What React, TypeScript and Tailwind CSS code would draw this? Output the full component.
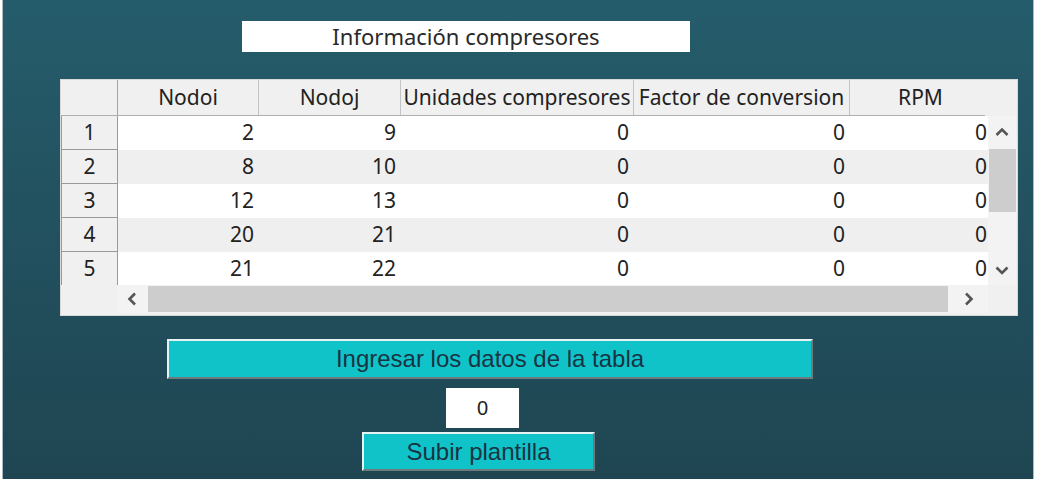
import React from "react";

type Dir = "up" | "down" | "left" | "right";

const chevronPaths: Record<Dir, string> = {
  up: "M1.5 9l5.5-5.5 5.5 5.5",
  down: "M1.5 4.5l5.5 5.5 5.5-5.5",
  left: "M9 1.5L3.5 7 9 12.5",
  right: "M5 1.5L10.5 7 5 12.5",
};

function Chevron({ dir }: { dir: Dir }) {
  return (
    <svg width="14" height="14" viewBox="0 0 14 14" fill="none" stroke="#555" strokeWidth="2.6">
      <path d={chevronPaths[dir]} />
    </svg>
  );
}

const columns = [
  { label: "Nodoi", w: "w-[141px]" },
  { label: "Nodoj", w: "w-[142px]" },
  { label: "Unidades compresores", w: "w-[233px]" },
  { label: "Factor de conversion", w: "w-[216px]" },
  { label: "RPM", w: "w-[142px]" },
];

const rows = [
  [2, 9, 0, 0, 0],
  [8, 10, 0, 0, 0],
  [12, 13, 0, 0, 0],
  [20, 21, 0, 0, 0],
  [21, 22, 0, 0, 0],
];

const raised =
  "border-2 border-t-[#e6f3f3] border-l-[#e6f3f3] border-b-[#6d7b7f] border-r-[#6d7b7f] bg-[#10c3c8] text-[#183442] flex items-center justify-center font-['Liberation_Sans',Arial,sans-serif] text-[24px]";

function DataGrid() {
  return (
    <div className="ml-[57px] mt-[27px] flex h-[237px] w-[958px] flex-col border border-[#d9d9d9] bg-[#f0f0f0] font-['Noto_Sans',sans-serif] text-[21px] text-[#222]">
      {/* header */}
      <div className="flex h-[36px] w-[924px] overflow-hidden border-b border-[#b0b0b0]">
        <div className="h-full w-[57px] shrink-0 border-r border-[#a3a3a3]" />
        {columns.map((c) => (
          <div
            key={c.label}
            className={`${c.w} flex h-full shrink-0 items-center justify-center overflow-hidden whitespace-nowrap border-r border-[#c4c4c4]`}
          >
            {c.label}
          </div>
        ))}
      </div>

      {/* body + vertical scrollbar */}
      <div className="flex h-[169px]">
        <div className="w-[927px] overflow-hidden">
          {rows.map((r, i) => (
            <div key={i} className="flex h-[34px]">
              <div
                className={`flex w-[57px] shrink-0 items-center justify-center border-x border-[#9a9a9a] bg-[#f0f0f0] ${
                  i < rows.length - 1 ? "border-b" : ""
                }`}
              >
                {i + 1}
              </div>
              {r.map((v, k) => (
                <div
                  key={k}
                  className={`${columns[k].w} flex shrink-0 items-center justify-end pr-[5px] ${
                    i % 2 === 0 ? "bg-white" : "bg-[#efefef]"
                  }`}
                >
                  {v}
                </div>
              ))}
            </div>
          ))}
        </div>
        <div className="flex w-[28px] flex-col bg-[#f3f3f3]">
          <div className="flex h-[33px] items-center justify-center">
            <Chevron dir="up" />
          </div>
          <div className="ml-[1px] h-[63px] bg-[#cdcdcd]" />
          <div className="flex-1" />
          <div className="flex h-[30px] items-center justify-center">
            <Chevron dir="down" />
          </div>
        </div>
      </div>

      {/* horizontal scrollbar */}
      <div className="flex h-[28px]">
        <div className="w-[57px] bg-[#f0f0f0]" />
        <div className="flex w-[870px] bg-[#f3f3f3]">
          <div className="flex w-[30px] items-center justify-center">
            <Chevron dir="left" />
          </div>
          <div className="my-[1px] w-[800px] bg-[#cdcdcd]" />
          <div className="flex flex-1 items-center justify-center">
            <Chevron dir="right" />
          </div>
        </div>
        <div className="w-[28px] bg-[#f0f0f0]" />
      </div>
    </div>
  );
}

export default function App() {
  return (
    <div className="flex h-[479px] w-[1038px] bg-white">
      <div className="ml-[2px] flex h-full w-[1032px] flex-col border-x border-[#a9bcc1] bg-gradient-to-b from-[#255c6b] to-[#1f4552]">
        <div className="ml-[239px] mt-[21px] flex h-[31px] w-[448px] items-center justify-center bg-white font-['Noto_Sans',sans-serif] text-[22px] text-[#2a2a2a]">
          Información compresores
        </div>

        <DataGrid />

        <button className={`ml-[164px] mt-[23px] h-[40px] w-[646px] ${raised}`}>
          Ingresar los datos de la tabla
        </button>

        <div className="ml-[443px] mt-[9px] flex h-[40px] w-[73px] items-center justify-center bg-white font-['Liberation_Sans',Arial,sans-serif] text-[20px] text-[#222]">
          0
        </div>

        <button className={`ml-[359px] mt-[4px] h-[39px] w-[233px] ${raised}`}>
          Subir plantilla
        </button>
      </div>
    </div>
  );
}
